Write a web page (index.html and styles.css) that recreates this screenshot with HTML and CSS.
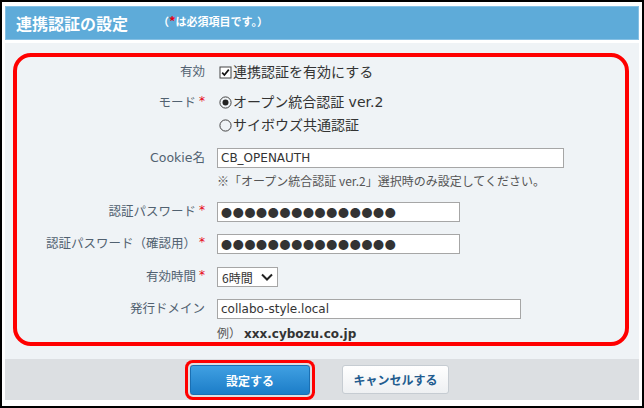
FILE: index.html
```html
<!DOCTYPE html>
<html lang="ja">
<head>
    <meta charset="UTF-8">
    <title>連携認証の設定</title>
    <link rel="stylesheet" href="styles.css">
</head>
<body>
    <div class="frame">
        <div class="header">
            <h1>連携認証の設定</h1>
            <span class="req-note">（<em>*</em>は必須項目です。）</span>
        </div>

        <div class="panel">
            <div class="form-box">
                <div class="row r-enable">
                    <div class="label">有効</div>
                    <div class="value big">
                        <div class="opt">
                            <svg class="mark" width="13" height="13" viewBox="0 0 13 13"><rect x="1" y="1" width="11" height="11" fill="#fff" stroke="#444" stroke-width="1"/><path d="M3.2 6.6 L5.4 9 L9.8 3.6" fill="none" stroke="#111" stroke-width="1.7"/></svg>
                            連携認証を有効にする
                        </div>
                    </div>
                </div>

                <div class="row r-mode">
                    <div class="label">モード<em>*</em></div>
                    <div class="value big">
                        <div class="opt">
                            <svg class="mark" width="13" height="13" viewBox="0 0 13 13"><circle cx="6.5" cy="6.5" r="5.6" fill="none" stroke="#444" stroke-width="1"/><circle cx="6.5" cy="6.5" r="3" fill="#222"/></svg>
                            オープン統合認証 ver.2
                        </div>
                        <div class="opt">
                            <svg class="mark" width="13" height="13" viewBox="0 0 13 13"><circle cx="6.5" cy="6.5" r="5.6" fill="none" stroke="#444" stroke-width="1"/></svg>
                            サイボウズ共通認証
                        </div>
                    </div>
                </div>

                <div class="row r-cookie">
                    <div class="label">Cookie名</div>
                    <div class="value">
                        <input class="field w-cookie" type="text" value="CB_OPENAUTH">
                        <div class="hint">※「オープン統合認証 ver.2」選択時のみ設定してください。</div>
                    </div>
                </div>

                <div class="row r-pass">
                    <div class="label">認証パスワード<em>*</em></div>
                    <div class="value">
                        <input class="field w-pass dots" type="text" value="●●●●●●●●●●●●●●●">
                    </div>
                </div>

                <div class="row r-pass2">
                    <div class="label">認証パスワード（確認用）<em>*</em></div>
                    <div class="value">
                        <input class="field w-pass dots" type="text" value="●●●●●●●●●●●●●●●">
                    </div>
                </div>

                <div class="row r-time">
                    <div class="label">有効時間<em>*</em></div>
                    <div class="value">
                        <div class="field select">
                            <span>6時間</span>
                            <svg width="12" height="8" viewBox="0 0 12 8"><path d="M1 1.5 L6 6.5 L11 1.5" fill="none" stroke="#222" stroke-width="2"/></svg>
                        </div>
                    </div>
                </div>

                <div class="row r-domain">
                    <div class="label">発行ドメイン</div>
                    <div class="value">
                        <input class="field w-domain" type="text" value="collabo-style.local">
                        <div class="hint example">例）<b>xxx.cybozu.co.jp</b></div>
                    </div>
                </div>
            </div>
        </div>

        <div class="footer">
            <button class="btn btn-primary">設定する</button>
            <button class="btn btn-cancel">キャンセルする</button>
        </div>
    </div>
</body>
</html>
```

FILE: styles.css
```css
* {
    margin: 0;
    padding: 0;
    box-sizing: border-box;
}

body {
    background-color: #fff;
    font-family: "DejaVu Sans", "Noto Sans CJK JP", sans-serif;
    color: #333;
}

.frame {
    width: 644px;
    height: 408px;
    border: 2px solid #000;
    padding: 4px 3px 6px 3px;
    background-color: #fff;
}

/* Header */
.header {
    height: 34px;
    background-color: #5eabd9;
    border: 1px solid #86c0e4;
    display: flex;
    align-items: center;
    padding-left: 10px;
    margin-bottom: 3px;
    color: #fff;
}

.header h1 {
    font-family: "Noto Sans CJK JP", sans-serif;
    font-size: 16px;
    font-weight: bold;
}

.req-note {
    font-family: "Noto Sans CJK JP", sans-serif;
    font-size: 11px;
    font-weight: bold;
    margin-left: 30px;
    margin-top: -6px;
}

.req-note em {
    font-style: normal;
    font-size: 13px;
    color: #e60012;
}

/* Form panel */
.panel {
    height: 316px;
    background-color: #eff3f6;
    padding: 10px 10px 0 8px;
}

.form-box {
    height: 293px;
    border: 4px solid #ff0000;
    border-radius: 18px;
    padding-top: 5px;
}

.row {
    display: grid;
    grid-template-columns: 188px 1fr;
    column-gap: 12px;
    align-items: start;
}

.label {
    text-align: right;
    font-family: "DejaVu Sans", "Noto Sans CJK JP", sans-serif;
    font-size: 12.5px;
    line-height: 20px;
    color: #516170;
    white-space: nowrap;
}

.label em {
    font-style: normal;
    color: #e60012;
    font-size: 12px;
    position: relative;
    top: -2px;
    margin-left: 3px;
}

.value.big {
    font-size: 14px;
    line-height: 20px;
    color: #333;
}

.opt {
    display: flex;
    align-items: center;
}

.mark {
    margin: 0 1px 0 2px;
}

.r-mode {
    margin-top: 9px;
}

.r-mode .label,
.r-mode .value.big {
    line-height: 23px;
}

.r-cookie {
    margin-top: 11px;
}

.r-pass {
    margin-top: 13px;
}

.r-pass2 {
    margin-top: 12px;
}

.r-time {
    margin-top: 13px;
}

.r-domain {
    margin-top: 12px;
}

.field {
    display: block;
    height: 20px;
    border: 1px solid #a6a6a6;
    background-color: #fff;
    padding: 0 3px;
    font-family: "DejaVu Sans", "Noto Sans CJK JP", sans-serif;
    font-size: 12px;
    color: #333;
    outline: none;
}

.w-cookie {
    width: 347px;
}

.w-pass {
    width: 243px;
}

.w-domain {
    width: 304px;
}

.dots {
    font-family: "Noto Sans CJK JP", sans-serif;
    font-size: 11px;
    letter-spacing: 0.7px;
    color: #333;
}

.select {
    width: 61px;
    display: flex;
    align-items: center;
    justify-content: space-between;
    padding: 0 4px 0 4px;
    font-family: "Noto Sans CJK JP", sans-serif;
}

.hint {
    margin-top: 5px;
    font-family: "Noto Sans CJK JP", sans-serif;
    font-size: 12px;
    line-height: 16px;
    color: #555;
}

.hint.example {
    margin-top: 6px;
}

.hint b {
    font-family: "DejaVu Sans", sans-serif;
    color: #333;
    margin-left: 3px;
}

/* Footer */
.footer {
    height: 41px;
    background-color: #dcdfe2;
    display: flex;
    justify-content: center;
    align-items: flex-start;
    gap: 32px;
    padding-top: 6px;
    padding-right: 5px;
}

.btn {
    font-family: "Noto Sans CJK JP", sans-serif;
    font-size: 12px;
    font-weight: bold;
    border-radius: 3px;
    cursor: pointer;
}

.btn-primary {
    width: 120px;
    height: 30px;
    color: #fff;
    border: 1px solid #1b6fb2;
    background: linear-gradient(#40a0e2, #1c7dc8);
    box-shadow: 0 0 0 2px #dcdfe2, 0 0 0 5px #ff0000;
}

.btn-cancel {
    width: 107px;
    height: 29px;
    color: #235c8f;
    border: 1px solid #c6ccd2;
    background: linear-gradient(#ffffff, #eef0f2);
}
```
